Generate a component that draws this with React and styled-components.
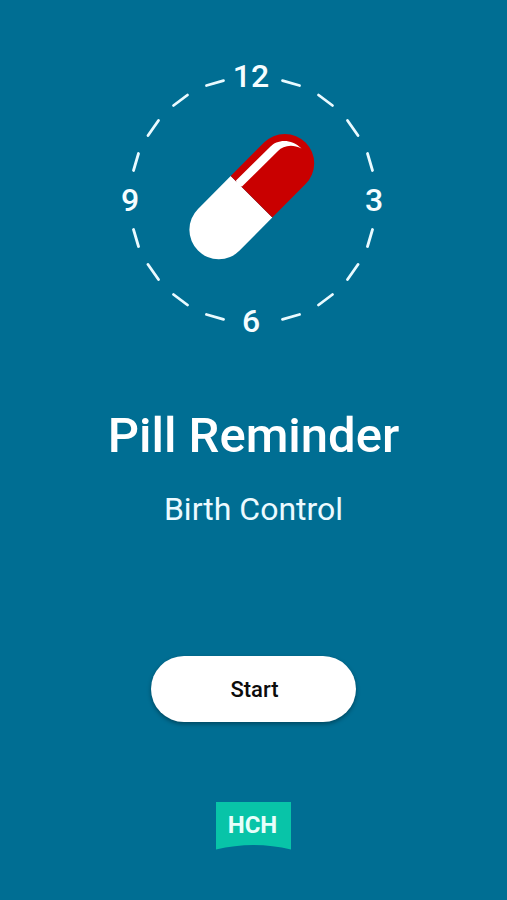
import styled, { createGlobalStyle } from 'styled-components';

const GlobalStyle = createGlobalStyle`
  body {
    margin: 0;
    background: #006e93;
    font-family: Roboto, "Liberation Sans", sans-serif;
  }
`;

const Screen = styled.main`
  display: flex;
  flex-direction: column;
  align-items: center;
  box-sizing: border-box;
  min-height: 100vh;
  padding: 50px 16px;
  background: #006e93;
  color: #fff;
`;

const Dial = styled.svg`
  display: block;
  width: 300px;
  height: 300px;
`;

const Numeral = styled.text`
  fill: #f6fdff;
  font-size: 32px;
  font-weight: 500;
  text-anchor: middle;
`;

const Title = styled.h1`
  margin: 58px 0 0;
  font-size: 49px;
  line-height: 56px;
  font-weight: 500;
  text-align: center;
`;

const Subtitle = styled.p`
  margin: 25px 0 0;
  color: #ecfaff;
  font-size: 32px;
  line-height: 40px;
  text-align: center;
`;

const StartButton = styled.button`
  width: 205px;
  height: 66px;
  margin-top: 127px;
  padding: 0 0 0 2px;
  border: 0;
  border-radius: 33px;
  background: #fff;
  box-shadow: 0 2px 4px rgba(0, 0, 0, 0.35);
  color: #0c0c0c;
  font-family: inherit;
  font-size: 22px;
  font-weight: 500;
  cursor: pointer;
`;

const Brand = styled.svg`
  display: block;
  width: 75px;
  height: 48px;
  margin-top: auto;
`;

const BrandText = styled.text`
  fill: #e8fffb;
  font-size: 24px;
  font-weight: 700;
  text-anchor: middle;
`;

const numerals = [
  { label: '12', x: 138, y: 27 },
  { label: '3', x: 261, y: 151 },
  { label: '6', x: 138, y: 272 },
  { label: '9', x: 17, y: 151 },
];

// one quarter of the ring, the other three are mirrored from it
const quarter = 'M29.5 -119.3L46.5 -114.5M65.5 -105L79.5 -94.5M94.5 -79.5L105 -64.5M114.5 -46.5L119.5 -29.5';
const mirrors = ['1 1', '-1 1', '1 -1', '-1 -1'];

function PillClock() {
  return (
    <Dial viewBox="-9 -10 300 300" role="img" aria-label="Pill clock">
      <g transform="translate(140 140)" stroke="#e9faff" strokeWidth="2.8" strokeLinecap="round">
        {mirrors.map((scale) => (
          <path key={scale} d={quarter} transform={`scale(${scale})`} />
        ))}
      </g>
      {numerals.map((n) => (
        <Numeral key={n.label} x={n.x} y={n.y}>{n.label}</Numeral>
      ))}
      <path fill="#fff" d="M117.700 116L85 149A29.400 29.400 0 0 0 126.600 190.600L159.300 157.600Z" />
      <path fill="#c90000" d="M117.700 116L151 82.500A29.400 29.400 0 0 1 192.600 124.100L159.300 157.600Z" />
      <path fill="#fff" d="M123 120.500L157.500 86.500C163.500 80 177.500 77.500 188.500 88.500C178.500 83.500 170 86 165 91L129 126.500L124 126Z" />
    </Dial>
  );
}

function Logo() {
  return (
    <Brand viewBox="0 0 75 48" role="img" aria-label="HCH">
      <path fill="#08c4a8" d="M0 0H75V47.500Q37.500 38.500 0 47.500Z" />
      <BrandText x="36.500" y="31">HCH</BrandText>
    </Brand>
  );
}

export default function App() {
  return (
    <>
      <GlobalStyle />
      <Screen>
        <PillClock />
        <Title>Pill Reminder</Title>
        <Subtitle>Birth Control</Subtitle>
        <StartButton type="button">Start</StartButton>
        <Logo />
      </Screen>
    </>
  );
}
